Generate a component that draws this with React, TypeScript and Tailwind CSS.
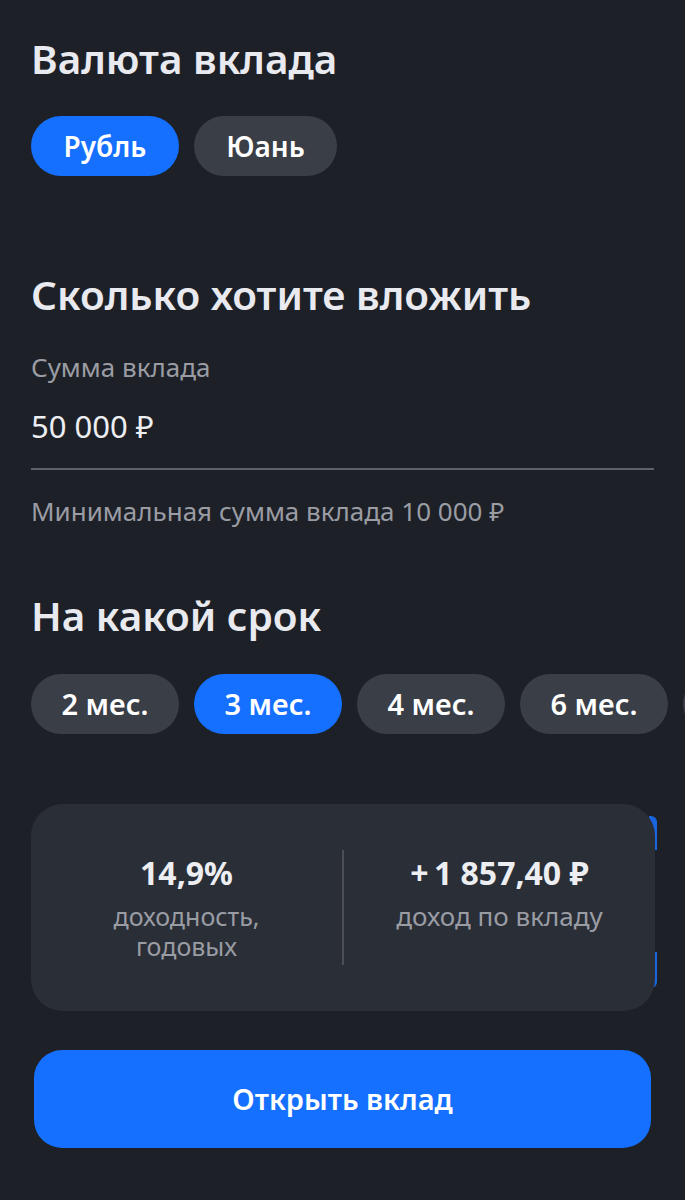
import { useState } from 'react';

const currencies = [
  { label: 'Рубль', width: 'w-[148px]' },
  { label: 'Юань', width: 'w-[143px]' },
];
const terms = ['2 мес.', '3 мес.', '4 мес.', '6 мес.'];

export default function App() {
  const [currency, setCurrency] = useState('Рубль');
  const [term, setTerm] = useState('3 мес.');

  return (
    <div
      className="min-h-[1200px] w-[685px] overflow-hidden bg-[#1d2027] text-[#e9eaef]"
      style={{ fontFamily: '"Noto Sans", "Open Sans", sans-serif' }}
    >
      <div className="px-[31px] pt-[33px]">
        {/* Currency */}
        <h2 className="text-[40.5px] font-semibold leading-[52px]">Валюта вклада</h2>
        <div className="mt-[31px] flex gap-[15px]">
          {currencies.map((c) => (
            <button
              key={c.label}
              onClick={() => setCurrency(c.label)}
              className={`h-[60px] ${c.width} rounded-full text-[28px] font-semibold text-white ${
                currency === c.label ? 'bg-[#1570ff]' : 'bg-[#3a3e46]'
              }`}
            >
              {c.label}
            </button>
          ))}
        </div>

        {/* Amount */}
        <h2 className="mt-[93px] text-[40.5px] font-semibold leading-[52px]">Сколько хотите вложить</h2>
        <div className="mt-[29px] text-[26px] leading-[34px] text-[#9a9ca4]">Сумма вклада</div>
        <div className="mt-[22px] text-[31px] leading-[40px] text-[#eceef2]">50 000 ₽</div>
        <div className="mt-[22px] h-[2px] w-[623px] bg-[#5f626a]" />
        <div className="mt-[24px] text-[26px] leading-[34px] text-[#9a9ca4]">
          Минимальная сумма вклада 10 000 ₽
        </div>

        {/* Term */}
        <h2 className="mt-[62px] text-[40.5px] font-semibold leading-[52px]">На какой срок</h2>
      </div>
      <div className="mt-[32px] flex gap-[15px] pl-[31px]">
        {terms.map((t) => (
          <button
            key={t}
            onClick={() => setTerm(t)}
            className={`h-[60px] w-[148px] shrink-0 rounded-full text-[29px] font-semibold text-white ${
              term === t ? 'bg-[#1570ff]' : 'bg-[#3a3e46]'
            }`}
          >
            {t}
          </button>
        ))}
        {/* next chip, scrolled off screen */}
        <div className="h-[60px] w-[148px] shrink-0 rounded-full bg-[#3a3e46]" />
      </div>

      {/* Summary card */}
      <div className="relative mx-[31px] mt-[70px] w-[624px]">
        <div className="absolute right-[-2px] top-[12px] h-[34px] w-[8px] rounded-tr-[6px] bg-[#1a66e0]" />
        <div className="absolute right-[-2px] top-[148px] h-[36px] w-[8px] rounded-br-[6px] bg-[#1a66e0]" />
        <div className="relative flex h-[207px] items-start rounded-[32px] bg-[#2a2e37] pt-[48px]">
          <div className="flex flex-1 flex-col items-center">
            <div className="text-[32px] font-bold leading-[42px] text-[#eceef2]">14,9%</div>
            <div className="mt-[7px] text-center text-[25px] leading-[30px] text-[#9a9ca4]">
              <div>доходность,</div>
              <div>годовых</div>
            </div>
          </div>
          <div className="-mt-[2px] h-[115px] w-[2px] bg-[#4b4e56]" />
          <div className="flex flex-1 flex-col items-center">
            <div className="text-[32px] font-bold leading-[42px] text-[#eceef2]">+{'\u2009'}1 857,40 ₽</div>
            <div className="mt-[7px] text-center text-[26px] leading-[30px] text-[#9a9ca4]">доход по вкладу</div>
          </div>
        </div>
      </div>

      {/* CTA */}
      <div className="px-[34px] pt-[39px]">
        <button className="h-[98px] w-full rounded-[28px] bg-[#1570ff] text-[29px] font-semibold text-white">
          Открыть вклад
        </button>
      </div>
    </div>
  );
}
